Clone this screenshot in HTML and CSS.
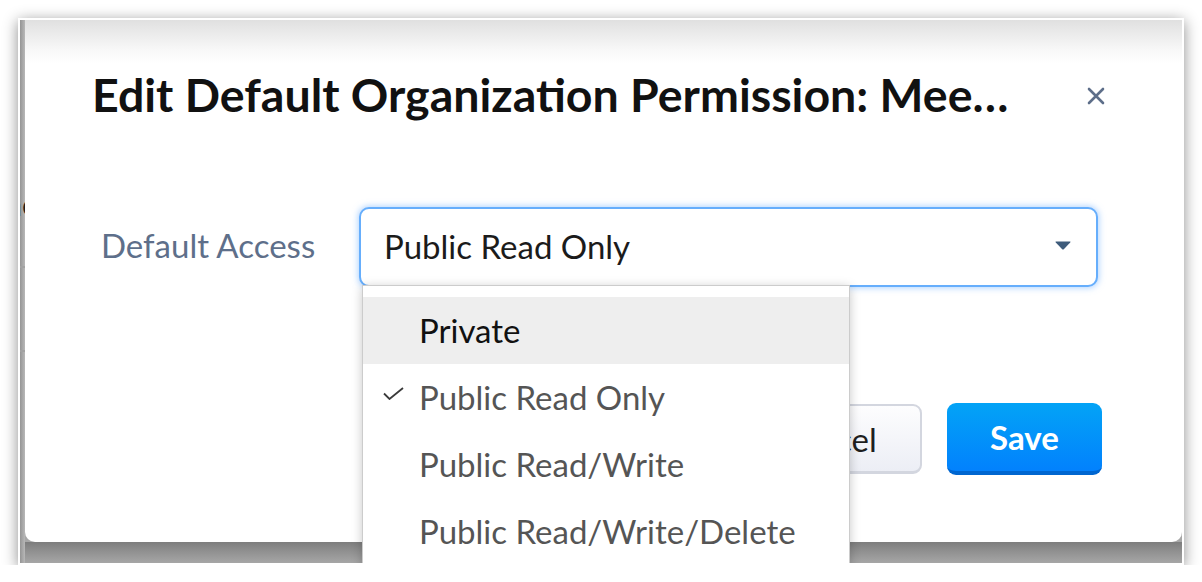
FILE: index.html
```html
<!DOCTYPE html>
<html lang="en">
<head>
<meta charset="utf-8">
<title>Edit Default Organization Permission</title>
<link rel="stylesheet" href="styles.css">
</head>
<body>
<div class="frame">
  <div class="viewport">
    <div class="strip">
      <div class="strip-text">Name</div>
      <div class="strip-line strip-line-a"></div>
      <div class="strip-line strip-line-b"></div>
    </div>
    <div class="column">
      <div class="modal">
        <div class="modal-header">
          <h1 class="modal-title">Edit Default Organization Permission: Mee…</h1>
          <button class="close" aria-label="Close">
            <svg width="18" height="18" viewBox="0 0 18 18"><path d="M2 2 L16 16 M16 2 L2 16" stroke="#5d6e89" stroke-width="2.6" stroke-linecap="round" fill="none"/></svg>
          </button>
        </div>
        <div class="form-row">
          <label class="field-label">Default Access</label>
          <div class="select-wrap">
            <div class="select">
              <span class="select-value">Public Read Only</span>
              <svg class="caret" width="16" height="9" viewBox="0 0 16 9"><path d="M1 0.5 H15 Q16 0.5 15.2 1.4 L8.8 8.2 Q8 9 7.2 8.2 L0.8 1.4 Q0 0.5 1 0.5 Z" fill="#3e5c7b"/></svg>
            </div>
            <ul class="menu">
              <li class="menu-item is-hover"><span class="check"></span><span>Private</span></li>
              <li class="menu-item"><span class="check"><svg width="21" height="13" viewBox="0 0 21 13"><path d="M1 6.5 L6.5 12 L20 1" stroke="#3a3a3a" stroke-width="1.8" fill="none"/></svg></span><span>Public Read Only</span></li>
              <li class="menu-item"><span class="check"></span><span>Public Read/Write</span></li>
              <li class="menu-item"><span class="check"></span><span>Public Read/Write/Delete</span></li>
            </ul>
          </div>
        </div>
        <div class="modal-footer">
          <button class="btn btn-cancel">Cancel</button>
          <button class="btn btn-save">Save</button>
        </div>
      </div>
      <div class="overlay-bottom"></div>
    </div>
  </div>
</div>
</body>
</html>
```

FILE: styles.css
```css
* { box-sizing: border-box; }

body {
  margin: 0;
  background: #ffffff;
  font-family: Lato, "Noto Sans", sans-serif;
}

.frame {
  margin: 18px 0 0 18px;
  width: 1166px;
  height: 547px;
  border: 2px solid #ffffff;
  box-shadow: 0 3px 14px rgba(0, 0, 0, 0.45);
}

.viewport {
  display: flex;
  height: 100%;
  overflow: hidden;
  background: #a8a8a8;
}

.strip {
  flex: none;
  width: 5px;
  overflow: hidden;
  position: relative;
  background: linear-gradient(to right, #959595, #b8b8b8);
}

.strip-text {
  margin: 164px 0 0 -60px;
  width: 64px;
  text-align: right;
  font-size: 30px;
  line-height: 40px;
  color: #1e1e1e;
}

.strip-line {
  height: 2px;
  background: #a2a2a2;
}

.strip-line-a { margin-top: 42px; }
.strip-line-b { margin-top: 82px; }

.column {
  flex: 1;
  display: flex;
  flex-direction: column;
}

.modal {
  position: relative;
  flex: none;
  height: 522px;
  background: linear-gradient(#e0e0e0, #f8f8f8 30px, #ffffff 44px);
  border-radius: 0 0 10px 10px;
}

.overlay-bottom {
  flex: 1;
  background: linear-gradient(#7d7d7d, #8a8a8a 6px, #a6a6a6);
}

.modal-header {
  display: flex;
  align-items: center;
  padding: 47px 74px 0 67px;
}

.modal-title {
  flex: 1;
  margin: 0;
  font-size: 46.5px;
  line-height: 54px;
  font-weight: 700;
  color: #111111;
  white-space: nowrap;
}

.close {
  flex: none;
  width: 24px;
  height: 24px;
  padding: 0;
  margin-top: 4px;
  border: 0;
  background: transparent;
  display: flex;
  align-items: center;
  justify-content: center;
}

.form-row {
  display: flex;
  align-items: center;
  margin-top: 86px;
  padding-left: 76px;
}

.field-label {
  width: 258px;
  flex: none;
  font-size: 33px;
  color: #5e6f8a;
  margin-top: -4px;
}

.select-wrap {
  position: relative;
  width: 739px;
}

.select {
  display: flex;
  align-items: center;
  justify-content: space-between;
  height: 80px;
  padding: 0 25px 0 23px;
  border: 2px solid #66aefc;
  border-radius: 10px;
  background: #ffffff;
  box-shadow: 0 0 6px 1px rgba(110, 175, 255, 0.55);
}

.select-value {
  font-size: 33px;
  color: #1b1b1b;
  margin-top: -2px;
}

.caret { margin-top: -4px; }

.menu {
  position: absolute;
  z-index: 2;
  left: 3px;
  top: 78px;
  width: 488px;
  height: 320px;
  margin: 0;
  padding: 11px 0 0;
  list-style: none;
  background: #ffffff;
  border: 1px solid #cccccc;
  box-shadow: 0 2px 10px rgba(0, 0, 0, 0.22);
}

.menu-item {
  display: flex;
  align-items: center;
  height: 67px;
  padding-left: 20px;
  padding-bottom: 2px;
  font-size: 33px;
  color: #555555;
}

.menu-item.is-hover {
  background: #eeeeee;
  color: #111111;
}

.check {
  flex: none;
  width: 36px;
  display: flex;
  align-items: center;
  margin-top: -6px;
}

.modal-footer {
  display: flex;
  justify-content: flex-end;
  gap: 25px;
  margin-top: 116px;
  padding-right: 80px;
}

.btn {
  font-family: Lato, "Noto Sans", sans-serif;
  font-size: 33px;
  border-radius: 9px;
  padding: 0;
}

.btn-cancel {
  width: 188px;
  height: 70px;
  margin-top: 1px;
  color: #1e1e1e;
  background: linear-gradient(#fdfdfe, #eceef5);
  border: 2px solid #d3d6df;
  border-bottom-width: 3px;
}

.btn-save {
  width: 155px;
  height: 72px;
  color: #ffffff;
  font-weight: 700;
  background: linear-gradient(#03a3f6, #0281fd);
  border: 0;
  border-bottom: 4px solid #0066d0;
}
```
